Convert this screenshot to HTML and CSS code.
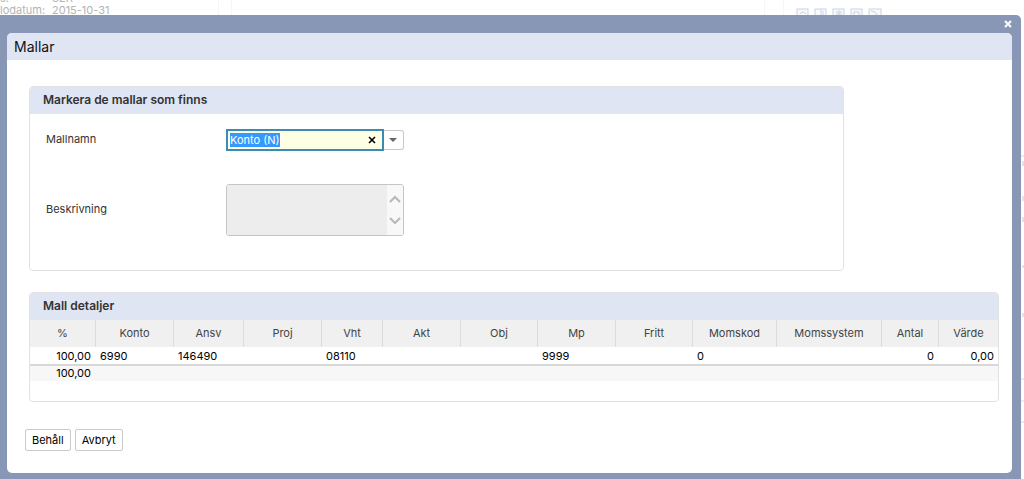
FILE: index.html
```html
<!DOCTYPE html>
<html lang="sv">
<head>
<meta charset="utf-8">
<title>Mallar</title>
<link rel="stylesheet" href="styles.css">
</head>
<body>
<div class="page">
  <div class="page-info">
    <dl class="facts">
      <dt>s:</dt><dd>SEK</dd>
      <dt>lodatum:</dt><dd>2015-10-31</dd>
    </dl>
  </div>
  <div class="page-mid"></div>
  <div class="page-tools">
    <svg class="tool" viewBox="0 0 14 14" aria-hidden="true"><rect x="1" y="1" width="11" height="13"/><path d="M4 6q3-4 6 0"/></svg>
    <svg class="tool" viewBox="0 0 14 14" aria-hidden="true"><rect x="1" y="1" width="11" height="13"/><path d="M7 1v9M9 3v7"/></svg>
    <svg class="tool" viewBox="0 0 14 14" aria-hidden="true"><rect x="1" y="1" width="11" height="13"/><path d="M4 4h6M4 6h6M7 2v8"/></svg>
    <svg class="tool" viewBox="0 0 14 14" aria-hidden="true"><rect x="1" y="1" width="11" height="13"/><path d="M4 4h5v5H4z"/></svg>
    <svg class="tool" viewBox="0 0 14 14" aria-hidden="true"><rect x="1" y="1" width="12" height="13"/><path d="M3 3l4 1 3 4"/></svg>
  </div>
  <svg class="page-edge" viewBox="0 0 3 479" aria-hidden="true">
    <path class="line" d="M0 156h3M0 379h3M0 401h3M0 422h3"/>
    <path class="dot" d="M2 161v5M2 196v5M2 217v5M2 265v3M2 313v4"/>
  </svg>
</div>

<div class="dialog" role="dialog" aria-labelledby="dialog-title">
  <div class="dialog-bar">
    <button class="close" type="button" aria-label="Stäng"><svg viewBox="0 0 8 8"><path d="M1 1l6 6M7 1l-6 6"/></svg></button>
  </div>
  <div class="dialog-body">
    <h1 class="dialog-title" id="dialog-title">Mallar</h1>
    <div class="content">
      <section class="panel panel-form">
        <h2 class="panel-title">Markera de mallar som finns</h2>
        <div class="form">
          <label for="name">Mallnamn</label>
          <div class="combo">
            <input class="combo-input" id="name" type="text" value="Konto (N)">
            <button class="clear" type="button" aria-label="Rensa"><svg viewBox="0 0 8 8"><path d="M1 1l6 6M7 1l-6 6"/></svg></button>
            <button class="arrow" type="button" aria-label="Visa mallar"><svg viewBox="0 0 8 4"><path d="M0 0h8L4 4z"/></svg></button>
          </div>
          <label for="desc">Beskrivning</label>
          <div class="memo">
            <textarea class="memo-text" id="desc" readonly></textarea>
            <div class="memo-scroll">
              <svg viewBox="0 0 12 8"><path d="M1 7l5-5 5 5"/></svg>
              <svg viewBox="0 0 12 8"><path d="M1 1l5 5 5-5"/></svg>
            </div>
          </div>
        </div>
      </section>

      <section class="panel panel-details">
        <h2 class="panel-title">Mall detaljer</h2>
        <table class="details">
          <colgroup>
            <col class="c65"><col class="c78"><col class="c70"><col class="c78"><col class="c61"><col class="c78"><col class="c77"><col class="c78"><col class="c77"><col class="c84"><col class="c105"><col class="c57"><col class="c60">
          </colgroup>
          <thead>
            <tr><th>%</th><th>Konto</th><th>Ansv</th><th>Proj</th><th>Vht</th><th>Akt</th><th>Obj</th><th>Mp</th><th>Fritt</th><th>Momskod</th><th>Momssystem</th><th>Antal</th><th>Värde</th></tr>
          </thead>
          <tbody>
            <tr><td class="num">100,00</td><td>6990</td><td>146490</td><td></td><td>08110</td><td></td><td></td><td>9999</td><td></td><td>0</td><td></td><td class="num">0</td><td class="num">0,00</td></tr>
          </tbody>
          <tfoot>
            <tr><td class="num">100,00</td><td colspan="12"></td></tr>
          </tfoot>
        </table>
      </section>

      <div class="actions">
        <button class="btn" type="button">Behåll</button>
        <button class="btn" type="button">Avbryt</button>
      </div>
    </div>
  </div>
</div>
<script src="script.js"></script>
</body>
</html>
```
FILE: styles.css
```css
* { box-sizing: border-box; }

body {
  margin: 0;
  min-height: 100vh;
  overflow: hidden;
  background: #fff;
  color: #333;
  font: 11px/16px Inter, "Liberation Sans", sans-serif;
}

button, input, textarea { margin: 0; font: inherit; }

svg { display: block; }

/* Page behind the dialog */
.page {
  display: grid;
  grid-template-columns: 219px 1fr 238px 3px;
  height: 100vh;
}

.page-info {
  border-right: 1px solid #f6f6f6;
  overflow: hidden;
}

.facts {
  display: grid;
  grid-template-columns: 52px 1fr;
  grid-auto-rows: 12px;
  margin: -8px 0 0;
  line-height: 12px;
  color: #b4b4b4;
}

.facts dd { margin: 0; }

.page-mid {
  margin: 0 18px 0 12px;
  border: solid #f6f6f6;
  border-width: 0 1px;
}

.page-tools {
  display: flex;
  gap: 4px;
  padding: 8px 0 0 12px;
  border-left: 1px solid #f6f6f6;
}

.tool {
  width: 14px;
  height: 14px;
  fill: #f7fafd;
  stroke: #c8d3e6;
}

.page-edge { width: 3px; height: 479px; }
.line { stroke: #d4d8e6; }
.dot { stroke: #c8c8cc; }

/* Dialog */
.dialog {
  position: absolute;
  inset: 15px 3px 0 0;
  display: flex;
  flex-direction: column;
  padding: 0 9px 6px 7px;
  border-radius: 0 5px 0 0;
  background: #8897b6;
}

.dialog-bar {
  display: flex;
  justify-content: flex-end;
  height: 18px;
}

.close {
  width: 8px;
  padding: 0;
  border: 0;
  background: none;
}

.close svg { width: 8px; height: 8px; fill: none; stroke: #fff; stroke-width: 2; }

.dialog-body {
  flex: 1;
  overflow: hidden;
  border-radius: 5px;
  background: #fff;
}

.dialog-title {
  margin: 0;
  padding: 0 7px;
  background: #dfe5f2;
  color: #111;
  font-size: 14px;
  font-weight: 400;
  line-height: 27px;
}

.content { padding: 26px 13px 0 22px; }

.panel {
  border: 1px solid #e2e2e4;
  border-radius: 4px;
  overflow: hidden;
}

.panel-form { width: 84%; }

.panel-title {
  margin: 0;
  padding: 0 13px 2px;
  background: #dfe5f2;
  color: #333;
  font-size: 12px;
  font-weight: 600;
  line-height: 25px;
}

/* Form */
.form {
  display: grid;
  grid-template-columns: 180px 178px;
  row-gap: 33px;
  align-items: center;
  padding: 15px 16px 34px;
}

.form label { padding-bottom: 2px; }

.combo { position: relative; display: flex; }

.combo-input {
  flex: 1;
  min-width: 0;
  height: 22px;
  padding: 0 2px;
  border: 2px solid #3c8bb4;
  outline: 0;
  background: #ffffe6;
  color: #333;
}

.combo-input::selection { background: #3399ff; color: #fff; }

.clear {
  position: absolute;
  top: 7px;
  right: 28px;
  padding: 0;
  border: 0;
  background: none;
}

.clear svg { width: 8px; height: 8px; fill: none; stroke: #000; stroke-width: 1.6; }

.arrow {
  width: 20px;
  height: 20px;
  margin-top: 1px;
  padding: 0 0 0 5px;
  border: 1px solid #c8c8c8;
  border-left: 0;
  border-radius: 0 3px 3px 0;
  background: #fff;
}

.arrow svg { width: 8px; height: 4px; fill: #666; }

.memo {
  display: flex;
  height: 52px;
  border: 1px solid #c6c6c6;
  border-radius: 3px;
  overflow: hidden;
}

.memo-text {
  flex: 1;
  min-width: 0;
  padding: 2px;
  border: 0;
  outline: 0;
  resize: none;
  background: #ededed;
}

.memo-scroll {
  display: flex;
  flex-direction: column;
  justify-content: space-between;
  width: 16px;
  padding: 10px 2px;
  background: #f8f8f8;
}

.memo-scroll svg { width: 12px; height: 8px; fill: none; stroke: #b8b8b8; stroke-width: 2; }

/* Details table */
.panel-details { margin-top: 21px; padding-bottom: 20px; }

.details {
  width: 100%;
  table-layout: fixed;
  border-collapse: separate;
  border-spacing: 0;
  color: #000;
}

.details th {
  height: 27px;
  padding: 0 0 2px;
  border-left: 1px solid #dcdcdc;
  background: #f0f0f0;
  color: #444;
  font-weight: 400;
}

.details th:first-child { border-left: 0; }

.details td {
  height: 19px;
  padding: 1px 5px 0;
  border-bottom: 2px solid #d8d8d8;
}

.details tfoot td {
  height: 15px;
  padding: 0 5px;
  border: 0;
  background: #f7f7f7;
  line-height: 15px;
}

.details .num { padding-right: 4px; padding-left: 4px; text-align: right; }

.c57 { width: 57px; }
.c60 { width: 60px; }
.c61 { width: 61px; }
.c65 { width: 65px; }
.c70 { width: 70px; }
.c77 { width: 77px; }
.c78 { width: 78px; }
.c84 { width: 84px; }
.c105 { width: 105px; }

/* Buttons */
.actions {
  display: flex;
  gap: 4px;
  margin: 27px 0 0 -4px;
}

.btn {
  height: 22px;
  padding: 0 6px;
  border: 1px solid #cacaca;
  border-radius: 2px;
  background: #fff;
  color: #000;
}
```
FILE: script.js
```js
const nameField = document.getElementById('name');
nameField.focus();
nameField.select();
```
